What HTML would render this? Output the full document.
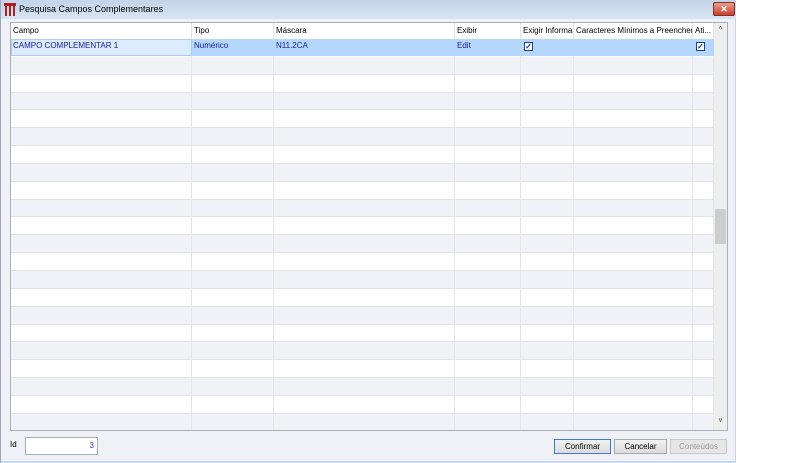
<!DOCTYPE html>
<html><head><style>
*{margin:0;padding:0;box-sizing:border-box}
body{width:800px;height:463px;background:#fff;font-family:"Liberation Sans",sans-serif;font-size:8px;position:relative;overflow:hidden}
.win{position:absolute;left:0;top:0;width:736px;height:463px;background:#f0f1f7;border-left:1px solid #9aa8bd;border-right:1px solid #c6d4e6}
.title{position:absolute;left:0;top:0;width:735px;height:19px;background:linear-gradient(#c3d4e9,#d8e4f2)}
.title span{position:absolute;left:18px;top:4px;font-size:9px;color:#000}
.close{position:absolute;left:712px;top:2px;width:22px;height:14px;background:linear-gradient(#e6a090,#c6402c);border:1px solid #8a3022;border-radius:2px;color:#fff;font-size:9px;text-align:center;line-height:12px;font-weight:bold}
.grid{position:absolute;left:9px;top:22px;width:718px;height:409px;background:#fff;border:1px solid #a9b0ba;overflow:hidden}
.hdr{position:absolute;top:0;height:16px;line-height:16px;border-right:1px solid #e2e2e2;padding-left:2px;color:#000;white-space:nowrap;overflow:hidden}
.row{position:absolute;left:0;width:703px;height:17.85px;border-bottom:1px solid #e3e3e6}
.row.g{background:#f1f2f7}
.vl{position:absolute;top:16px;bottom:0;width:1px;background:#e6e6e6}
.sel{background:#b5d7fb}
.cell{position:absolute;top:0;height:17px;line-height:14px;color:#1a1a9a;padding-left:2px}
.cb{position:absolute;width:9px;height:9px;border:1px solid #1c3f9c;background:#fff;top:3px;color:#1c3f9c;font-size:8px;line-height:7px;text-align:center;font-weight:bold}
.sb{position:absolute;left:703px;top:0;width:13px;height:407px;background:#eeeeee}
.btn{position:absolute;top:439px;height:15px;border:1px solid #a8a8a8;background:linear-gradient(#f2f2f2,#dcdcdc);text-align:center;line-height:13px;font-size:8px}
</style></head><body>
<div class="win">
<div class="title">
<svg style="position:absolute;left:3px;top:3px" width="12" height="13"><rect x="0" y="0" width="12" height="3" fill="#b02020"/><rect x="1" y="3" width="2" height="10" fill="#b02020"/><rect x="5" y="3" width="2" height="10" fill="#b02020"/><rect x="9" y="3" width="2" height="10" fill="#b02020"/></svg>
<span>Pesquisa Campos Complementares</span>
<div class="close">✕</div>
</div>
<div class="grid">
<div class="hdr" style="left:0;width:181px">Campo</div>
<div class="hdr" style="left:181px;width:82px">Tipo</div>
<div class="hdr" style="left:263px;width:181px">Máscara</div>
<div class="hdr" style="left:444px;width:66px">Exibir</div>
<div class="hdr" style="left:510px;width:53px">Exigir Informar</div>
<div class="hdr" style="left:563px;width:119px">Caracteres Mínimos a Preencher</div>
<div class="hdr" style="left:682px;width:21px">Ati...</div>
<div id="rows"></div>
<div class="vl" style="left:180px"></div><div class="vl" style="left:262px"></div><div class="vl" style="left:443px"></div><div class="vl" style="left:509px"></div><div class="vl" style="left:562px"></div><div class="vl" style="left:681px"></div><div class="vl" style="left:702px"></div>
<div style="position:absolute;left:0;top:16px;width:703px;height:17px">
<div style="position:absolute;left:0;width:181px;height:17px;background:#dcebfd;border:1px solid #a9cdf5"></div>
<div class="sel" style="position:absolute;left:181px;width:522px;height:17px"></div>
<div class="cell" style="left:0">CAMPO COMPLEMENTAR 1</div>
<div class="cell" style="left:181px">Numérico</div>
<div class="cell" style="left:263px">N11.2CA</div>
<div class="cell" style="left:444px">Edit</div>
<div class="cb" style="left:513px">✓</div>
<div class="cb" style="left:685px">✓</div>
</div>
<div class="sb">
<div style="position:absolute;top:2px;width:13px;text-align:center;color:#555;font-size:8px">^</div>
<div style="position:absolute;top:186px;left:1px;width:11px;height:35px;background:#cdcdcd"></div>
<div style="position:absolute;top:394px;width:13px;text-align:center;color:#555;font-size:7px">v</div>
</div>
</div>
<div style="position:absolute;left:9px;top:440px;font-size:8px">Id</div>
<div style="position:absolute;left:24px;top:437px;width:73px;height:18px;background:#fff;border:1px solid #a9b0ba;text-align:right;padding-right:3px;line-height:16px;color:#3030b0">3</div>
<div class="btn" style="left:553px;width:57px;border-color:#3a7bd0">Confirmar</div>
<div class="btn" style="left:613px;width:53px">Cancelar</div>
<div class="btn" style="left:669px;width:57px;color:#999;background:#e6e6e6;border-color:#c8c8c8">Conteúdos</div>
<div style="position:absolute;left:0;top:461px;width:735px;height:2px;background:#c6dbf2"></div>
</div>
<script>
var h='';for(var i=0;i<22;i++){var t=16+17.85*(i+1);h+='<div class="row'+(i%2==0?' g':'')+'" style="top:'+t+'px"></div>';}
document.getElementById('rows').innerHTML=h;
</script>
</body></html>
